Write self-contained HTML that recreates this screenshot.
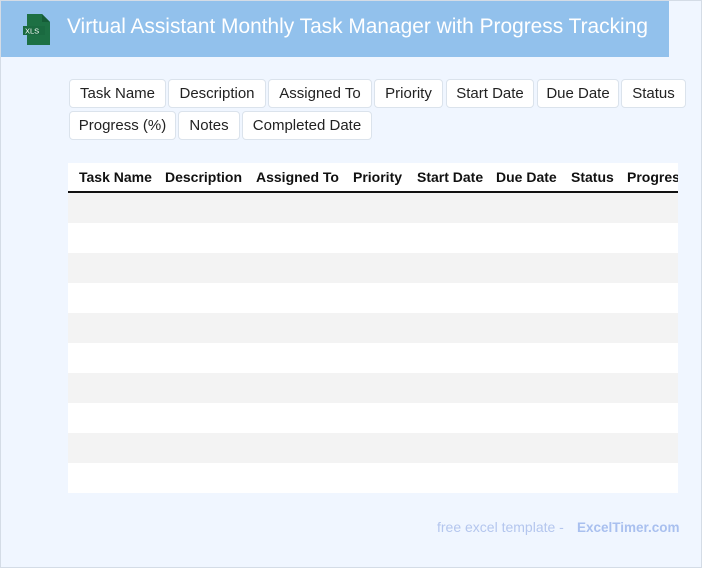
<!DOCTYPE html>
<html><head><meta charset="utf-8"><style>
*{box-sizing:border-box;margin:0;padding:0}
body{width:702px;height:568px;overflow:hidden;background:#fff;font-family:"Liberation Sans",Arial,sans-serif}
.page{position:absolute;left:0;top:0;width:702px;height:568px;background:#f0f6ff;box-shadow:inset 0 0 0 1px #d4dce6}
.hdr{position:absolute;left:1px;top:1px;width:668px;height:56px;background:#92c1ec}
.hdr h1{position:absolute;left:66px;top:14px;font-size:20.9px;font-weight:normal;color:#fff;white-space:nowrap}
.icon{position:absolute;left:20px;top:13px}
.chip{position:absolute;height:29px;border:1px solid #dbe3ec;border-radius:4px;background:#fff;font-size:15px;color:#222;line-height:27px;text-align:center;white-space:nowrap}
.tbl{position:absolute;left:68px;top:163px;width:610px;overflow:hidden}
.th{height:30px;background:#fff;border-bottom:2px solid #111;position:relative}
.th span{position:absolute;top:6px;font-size:14px;font-weight:bold;color:#111;white-space:nowrap}
.r{height:30px}
.r.g{background:#f3f3f3}.r.w{background:#fff}
.foot{position:absolute;top:519px;font-size:14px;color:#b4c6ee;white-space:nowrap}
</style></head><body><div class="page">
<div class="hdr">
<svg class="icon" width="30" height="32" viewBox="0 0 30 32"><path d="M6 0h15l8 8v23H6z" fill="#1d7044"/><path d="M21 0v8h8z" fill="#155c37"/><rect x="2" y="12" width="22" height="9" fill="#1a6a40"/><text x="4" y="19.5" font-size="7.5" fill="#fff" font-family="Liberation Sans">XLS</text></svg>
<h1>Virtual Assistant Monthly Task Manager with Progress Tracking</h1>
</div>
<div class="chip" style="left:69px;top:79px;width:97px">Task Name</div>
<div class="chip" style="left:168px;top:79px;width:98px">Description</div>
<div class="chip" style="left:268px;top:79px;width:104px">Assigned To</div>
<div class="chip" style="left:374px;top:79px;width:69px">Priority</div>
<div class="chip" style="left:446px;top:79px;width:88px">Start Date</div>
<div class="chip" style="left:537px;top:79px;width:82px">Due Date</div>
<div class="chip" style="left:621px;top:79px;width:65px">Status</div>
<div class="chip" style="left:69px;top:111px;width:107px">Progress (%)</div>
<div class="chip" style="left:178px;top:111px;width:62px">Notes</div>
<div class="chip" style="left:242px;top:111px;width:130px">Completed Date</div>
<div class="tbl">
<div class="th"><span style="left:11px">Task Name</span><span style="left:97px">Description</span><span style="left:188px">Assigned To</span><span style="left:285px">Priority</span><span style="left:349px">Start Date</span><span style="left:428px">Due Date</span><span style="left:503px">Status</span><span style="left:559px">Progress (%)</span></div>
<div class="r g"></div><div class="r w"></div><div class="r g"></div><div class="r w"></div><div class="r g"></div><div class="r w"></div><div class="r g"></div><div class="r w"></div><div class="r g"></div><div class="r w"></div>
</div>
<div class="foot" style="left:437px">free excel template -</div>
<div class="foot" style="left:577px;font-weight:bold;color:#a9c0ef;font-size:13.5px;top:520px">ExcelTimer.com</div>
</div></body></html>
